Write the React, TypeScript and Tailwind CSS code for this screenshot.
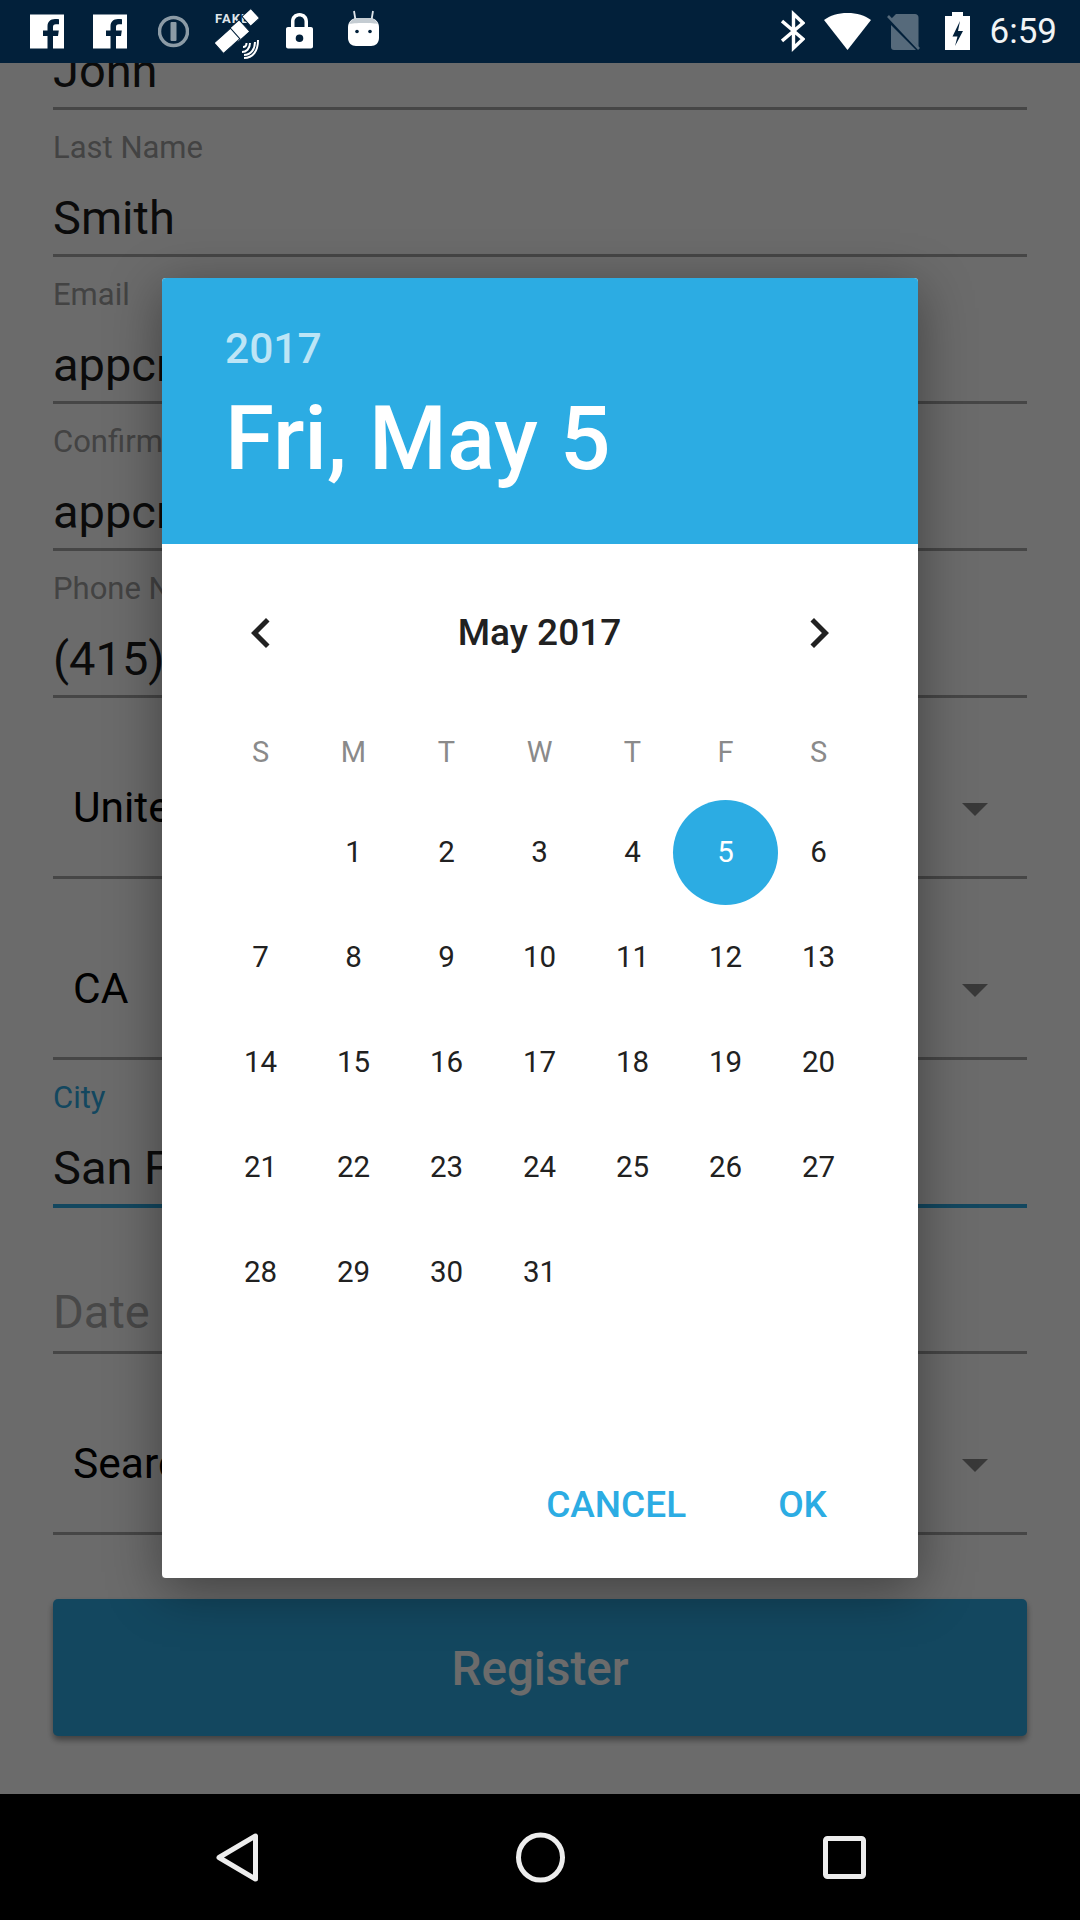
import React from "react";

const roboto = "font-['Roboto',sans-serif]";

function FBox({ className }: { className?: string }) {
  return (
    <svg viewBox="0 0 34 63" width={34} height={63} className={className}>
      <path
        fill="#fff"
        fillRule="evenodd"
        d="M0 14.500h34v34H23V36h5l.8-5.500H23V27c0-1.700.7-2.800 3-2.800h3v-5c-1-.1-2.400-.2-4-.2-4.500 0-7.500 2.700-7.500 7.500v3.900H13V36h4.500v12.500H0z"
      />
    </svg>
  );
}

function StatusBar() {
  return (
    <div className={`flex h-[63px] shrink-0 items-start bg-[#02203a] text-white ${roboto}`}>
      <FBox className="ml-[30px]" />
      <FBox className="ml-[29px]" />
      <svg viewBox="0 0 31 63" width={31} height={63} className="ml-[31px]">
        <circle cx="15.500" cy="31.500" r="14" fill="none" stroke="#8c9ba6" strokeWidth="3.500" />
        <rect x="12.500" y="22" width="6" height="19" rx="1" fill="#8c9ba6" />
      </svg>
      <svg viewBox="0 0 44 63" width={44} height={63} className="ml-[26px]">
        <text x="0" y="23" fill="#dfe5ea" fontSize="13" fontWeight="700" fontFamily="Roboto, sans-serif" letterSpacing="1">
          FAKE
        </text>
        <g fill="#fff" stroke="#02203a" strokeWidth="1">
          <rect x="-5" y="-6.500" width="12" height="13" transform="translate(35 18) rotate(-42)" />
          <rect x="-8" y="-8" width="16" height="16" transform="translate(23.500 31) rotate(-42)" />
          <rect x="-7" y="-7" width="22" height="14" transform="translate(9 43.500) rotate(-42)" />
        </g>
        <g fill="none" stroke="#fff" strokeWidth="2">
          <path d="M27 52c4 0 8-3 8-9" />
          <path d="M28 47c2.500 0 3.500-2 3.500-4" />
          <path d="M29 55c7 0 11-6 11-13" />
          <path d="M29 58c9 0 14-7 14-18" />
        </g>
      </svg>
      <svg viewBox="0 0 27 63" width={27} height={63} className="ml-[27px]">
        <path
          fill="#fff"
          fillRule="evenodd"
          d="M2 27h3v-5.500C5 16.500 8.500 13 13.500 13S22 16.500 22 21.500V27h3c1.100 0 2 .9 2 2v17.500c0 1.100-.9 2-2 2H2c-1.100 0-2-.9-2-2V29c0-1.100.9-2 2-2zm6.500 0h10v-5.500c0-2.800-2.200-5-5-5s-5 2.200-5 5zm5 7.500a3.800 3.800 0 1 0 0 7.600 3.800 3.800 0 0 0 0-7.600z"
        />
      </svg>
      <svg viewBox="0 0 31 63" width={31} height={63} className="ml-[35px]">
        <path d="M6 11l1.500 9M25 11l-1.500 9" stroke="#dfe5ea" strokeWidth="1.800" />
        <path fill="#fff" d="M0 27c0-5 4-9 9-9h13c5 0 9 4 9 9v11c0 5-3.500 8-8 8H8c-4.500 0-8-3-8-8z" />
        <path fill="#c4ccd2" d="M1 24c2-4 5-6 8-6h13c3 0 6 2 8 6-4-1.500-25-1.500-29 0z" />
        <circle cx="9" cy="31.500" r="1.800" fill="#02203a" />
        <circle cx="22" cy="31.500" r="1.800" fill="#02203a" />
      </svg>
      <div className="flex-1" />
      <svg viewBox="0 0 24 63" width={24} height={63}>
        <path d="M1 21l21 18-9.500 9V14l9.500 9L1 41" fill="none" stroke="#fff" strokeWidth="3.400" />
      </svg>
      <svg viewBox="0 0 47 63" width={47} height={63} className="ml-[19px]">
        <path fill="#fff" d="M23.500 50L0 20C6 15.500 14 13 23.500 13S41 15.500 47 20z" />
      </svg>
      <svg viewBox="0 0 34 63" width={34} height={63} className="ml-[16px]">
        <path fill="#566a7b" d="M14 14h14c2 0 3.500 1.500 3.500 3.500V47L4 19l5-5zM4 25l25 25H7c-1.800 0-3-1.300-3-3z" />
        <path d="M1 16l31 33" stroke="#566a7b" strokeWidth="2.600" />
      </svg>
      <svg viewBox="0 0 25 63" width={25} height={63} className="ml-[24px]">
        <path fill="#fff" fillRule="evenodd" d="M7 12h11v4h7v34H0V16h7zM15 21l-7.500 15.500h5L10 46l8-15h-5z" />
      </svg>
      <span className="ml-[20px] mr-[23px] text-[35px] leading-[63px] text-[#f2f4f5]">6:59</span>
    </div>
  );
}

function Field({ label, value, hint, h = "h-[147px]", focus }: { label?: string; value?: string; hint?: string; h?: string; focus?: boolean }) {
  return (
    <div className={`relative flex flex-col justify-end ${h} ${focus ? "border-b-[4px] border-[#2faae3]" : "border-b-[3px] border-[#a8a8a8]"}`}>
      {label && (
        <div className={`mb-[24px] text-[31px] leading-[36px] ${focus ? "text-[#2faae3]" : "text-[#a0a0a0]"}`}>{label}</div>
      )}
      {value && <div className="mb-[8px] text-[47px] leading-[56px] text-[#1c1c1c]">{value}</div>}
      {hint && <div className="mb-[11px] text-[47px] leading-[56px] text-[#ababab]">{hint}</div>}
    </div>
  );
}

function Spinner({ value }: { value: string }) {
  return (
    <div className="flex h-[181px] items-end border-b-[3px] border-[#a8a8a8] pb-[40px] pl-[20px] pr-[39px]">
      <div className="flex-1 text-[42.500px] leading-[56px] text-black">{value}</div>
      <div className="mb-[20px] h-0 w-0 border-x-[13px] border-t-[13px] border-x-transparent border-t-[#888]" />
    </div>
  );
}

function Form() {
  return (
    <div className={`-mt-[100px] flex flex-col bg-white px-[53px] ${roboto}`}>
      <Field value="John" />
      <Field label="Last Name" value="Smith" />
      <Field label="Email" value="appcrawler3@gmail.com" />
      <Field label="Confirm Email" value="appcrawler3@gmail.com" />
      <Field label="Phone Number" value="(415) 555-0123" />
      <Spinner value="United States" />
      <Spinner value="CA" />
      <Field label="City" value="San Francisco" h="h-[148px]" focus />
      <Field hint="Date of Birth" h="h-[146px]" />
      <Spinner value="Search" />
      <div className="mt-[64px] flex h-[137px] items-center justify-center rounded-[5px] bg-[#2faae3] pt-[5px] text-[47.500px] font-medium text-white shadow-[0_4px_6px_rgba(0,0,0,0.4)]">
        Register
      </div>
      <div className="h-[200px]" />
    </div>
  );
}

const weeks: (number | null)[][] = [
  [null, 1, 2, 3, 4, 5, 6],
  [7, 8, 9, 10, 11, 12, 13],
  [14, 15, 16, 17, 18, 19, 20],
  [21, 22, 23, 24, 25, 26, 27],
  [28, 29, 30, 31, null, null, null],
];

function Dialog() {
  return (
    <div className={`absolute left-[162px] top-[215px] flex h-[1300px] w-[756px] flex-col overflow-hidden rounded-[4px] bg-white ${roboto}`}>
      <div className="h-[266px] shrink-0 bg-[#2cace3] pl-[63px] pt-[46px] text-white">
        <div className="text-[42.500px] font-medium leading-[50px] text-white/70">2017</div>
        <div className="mt-[13px] text-[89px] font-medium leading-[104px]">Fri, May 5</div>
      </div>
      <div className="flex flex-1 flex-col pl-[52px] pr-[53px]">
        <div className="mt-[36px] flex h-[105px] items-center justify-between">
          <div className="flex w-[93px] justify-center">
            <svg viewBox="0 0 24 24" width={60} height={60} fill="#212121">
              <path d="M15.410 7.410 14 6l-6 6 6 6 1.410-1.410L10.830 12z" />
            </svg>
          </div>
          <div className="text-[37px] font-medium text-[#212121]">May 2017</div>
          <div className="flex w-[93px] justify-center">
            <svg viewBox="0 0 24 24" width={60} height={60} fill="#212121">
              <path d="M8.590 16.590 10 18l6-6-6-6-1.410 1.410L13.170 12z" />
            </svg>
          </div>
        </div>
        <div className="mt-[38px] grid h-[60px] grid-cols-7 items-center text-center text-[29px] text-[#8a8a8a]">
          {["S", "M", "T", "W", "T", "F", "S"].map((d, i) => (
            <div key={i}>{d}</div>
          ))}
        </div>
        <div className="mt-[17px] flex flex-col">
          {weeks.map((w, i) => (
            <div key={i} className="grid h-[105px] grid-cols-7 items-center text-center text-[29.500px] text-[#212121]">
              {w.map((d, j) =>
                d === 5 ? (
                  <div key={j} className="flex h-[105px] w-[105px] items-center justify-center justify-self-center rounded-full bg-[#2cace3] text-white">
                    {d}
                  </div>
                ) : (
                  <div key={j}>{d}</div>
                )
              )}
            </div>
          ))}
        </div>
      </div>
      <div className="mb-[47px] flex items-center justify-end gap-[92px] pr-[91px] text-[37px] font-medium leading-[52px] text-[#2cace3]">
        <span>CANCEL</span>
        <span>OK</span>
      </div>
    </div>
  );
}

function NavBar() {
  return (
    <div className="flex h-[126px] shrink-0 items-start bg-black">
      <svg viewBox="0 0 43 126" width={43} height={126} className="ml-[216px]">
        <path d="M39.500 42v43L3 63.500z" fill="none" stroke="#ededed" strokeWidth="5" strokeLinejoin="round" />
      </svg>
      <svg viewBox="0 0 49 126" width={49} height={126} className="ml-[257px]">
        <ellipse cx="24.500" cy="63.500" rx="22" ry="22.500" fill="none" stroke="#ededed" strokeWidth="5" />
      </svg>
      <svg viewBox="0 0 43 126" width={43} height={126} className="ml-[258px]">
        <rect x="2.500" y="44.500" width="38" height="38" rx="2" fill="none" stroke="#ededed" strokeWidth="5" />
      </svg>
    </div>
  );
}

export default function App() {
  return (
    <div className="flex h-[1920px] w-[1080px] flex-col overflow-hidden bg-black">
      <StatusBar />
      <div className="relative flex-1 overflow-hidden bg-white">
        <Form />
        <div className="absolute inset-0 bg-black/58" />
        <div className="absolute left-[162px] top-[215px] h-[1300px] w-[756px] shadow-[0_12px_50px_rgba(0,0,0,0.4)]" />
        <Dialog />
      </div>
      <NavBar />
    </div>
  );
}
